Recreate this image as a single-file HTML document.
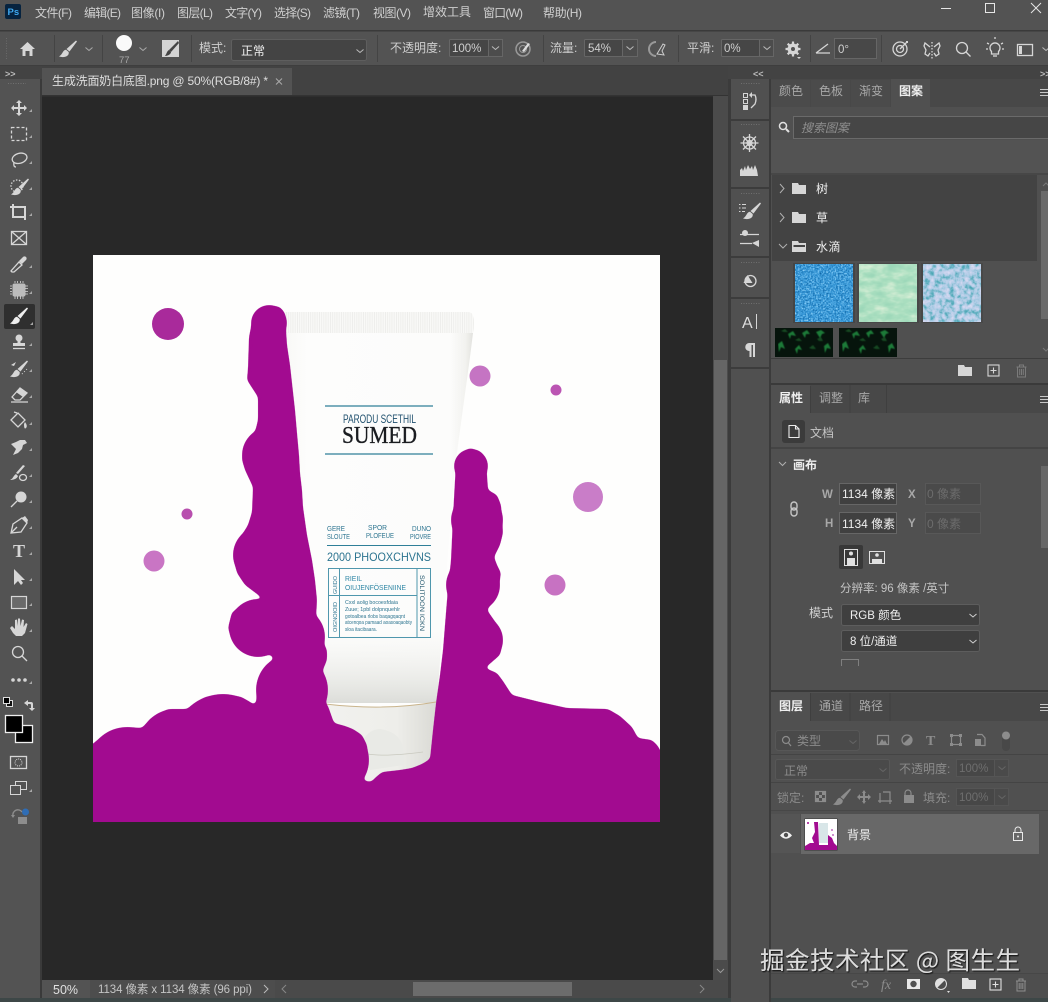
<!DOCTYPE html>
<html><head><meta charset="utf-8"><title>PS</title>
<style>
html,body{margin:0;padding:0;background:#535353;width:1048px;height:1002px;overflow:hidden}
svg{display:block;position:absolute;left:0;top:0}
text{font-family:"Liberation Sans","Noto Sans CJK SC",sans-serif;font-size:12px;fill:#cfcfcf}
.d{fill:#8b8b8b}.t{fill:#a8a8a8}.w{fill:#efefef}
.s{fill:none;stroke:#d6d6d6;stroke-width:1.3}
.f{fill:#d6d6d6}
.g{fill:none;stroke:#8c8c8c;stroke-width:1.2}
.gf{fill:#8c8c8c}
.l{fill:#2c7490;font-family:"Liberation Sans",sans-serif}
</style></head><body>
<svg width="1048" height="1002" viewBox="0 0 1048 1002" xmlns="http://www.w3.org/2000/svg">
<defs>
<filter id="round" x="80" y="295" width="600" height="550" filterUnits="userSpaceOnUse" color-interpolation-filters="sRGB">
<feGaussianBlur stdDeviation="2"/><feComponentTransfer><feFuncA type="linear" slope="9" intercept="-4"/></feComponentTransfer>
</filter>
<filter id="wm" x="-5%" y="-20%" width="110%" height="140%"><feDropShadow dx="1" dy="1" stdDeviation="0.6" flood-color="#111" flood-opacity="1"/></filter>
<filter id="lf" x="0" y="0" width="100%" height="100%"><feGaussianBlur stdDeviation=".5"/></filter>
<filter id="sw1" x="0" y="0" width="100%" height="100%" color-interpolation-filters="sRGB"><feTurbulence type="fractalNoise" baseFrequency=".6" numOctaves="2" seed="4"/><feColorMatrix values="1 0 0 0 0 1 0 0 0 0 1 0 0 0 0 0 0 0 0 1"/><feComponentTransfer><feFuncR type="table" tableValues="0 .1 .22 .5 .75"/><feFuncG type="table" tableValues=".3 .45 .6 .78 .9"/><feFuncB type="table" tableValues=".55 .7 .85 .95 1"/></feComponentTransfer></filter>
<filter id="sw2" x="0" y="0" width="100%" height="100%" color-interpolation-filters="sRGB"><feTurbulence type="fractalNoise" baseFrequency=".07 .14" numOctaves="3" seed="8"/><feColorMatrix values="1 0 0 0 0 1 0 0 0 0 1 0 0 0 0 0 0 0 0 1"/><feComponentTransfer><feFuncR type="table" tableValues=".6 .62 .68 .8 .92"/><feFuncG type="table" tableValues=".84 .85 .88 .92 .97"/><feFuncB type="table" tableValues=".72 .73 .76 .82 .88"/></feComponentTransfer></filter>
<filter id="sw3" x="0" y="0" width="100%" height="100%" color-interpolation-filters="sRGB"><feTurbulence type="fractalNoise" baseFrequency=".2" numOctaves="3" seed="3"/><feColorMatrix values="1 0 0 0 0 1 0 0 0 0 1 0 0 0 0 0 0 0 0 1"/><feComponentTransfer><feFuncR type="table" tableValues=".25 .35 .68 .82 .9"/><feFuncG type="table" tableValues=".62 .68 .8 .84 .92"/><feFuncB type="table" tableValues=".68 .74 .9 .94 .98"/></feComponentTransfer></filter>
<linearGradient id="tubeH" x1="0" x2="1" y1="0" y2="0"><stop offset="0" stop-color="#f8f8f6"/><stop offset=".12" stop-color="#fdfdfc"/><stop offset=".88" stop-color="#fcfcfb"/><stop offset=".96" stop-color="#f2f2ef"/><stop offset="1" stop-color="#e2e2de"/></linearGradient>
<linearGradient id="tubeV" x1="0" x2="0" y1="0" y2="1"><stop offset="0" stop-color="#fff" stop-opacity="0"/><stop offset=".8" stop-color="#f2f2ef" stop-opacity="0"/><stop offset=".95" stop-color="#e6e7e3" stop-opacity=".9"/><stop offset="1" stop-color="#dcddd9"/></linearGradient>
<linearGradient id="cap" x1="0" x2="1" y1="0" y2="0"><stop offset="0" stop-color="#f3f3f0"/><stop offset=".7" stop-color="#eeeeea"/><stop offset="1" stop-color="#dadad5"/></linearGradient>
<pattern id="crimp" width="2.2" height="20" patternUnits="userSpaceOnUse"><rect width="2.2" height="20" fill="#f9f9f7"/><rect width=".7" height="20" fill="#ebebe8"/></pattern>
<clipPath id="cv"><rect x="93" y="255" width="567" height="567"/></clipPath>
<clipPath id="thumb"><rect x="805" y="819" width="32" height="31"/></clipPath>
<g id="brush"><path d="M8-8.500 9-7.500 1.500 2.500-1.500 0Z"/><path d="M-2 .7C-5.500 1-5 5-9 7.500-4 9 1.500 7.500.7 3Z"/></g>
<path id="chev" d="M-3.500-1.500 0 1.500 3.500-1.500" fill="none" stroke-width="1"/>
<g id="folder"><path d="M0 0H6L7 2H14V11H0Z"/></g>
<g id="trash" fill="none" stroke-width="1"><path d="M-5-4H5M-2-4V-6H2V-4M-4-4V6H4V-4M-1.800-2V4M0-2V4M1.800-2V4"/></g>
<g id="plusbox" fill="none" stroke-width="1.100"><rect x="-5.500" y="-5.500" width="11" height="11"/><path d="M-3 0H3M0-3V3"/></g>
<g id="leaves">
<rect width="58" height="29" fill="#06140c"/>
<g filter="url(#lf)">
<path d="M13 6 18 3 21 8 16 7 15 11ZM27 5 32 2 35 6 31 6 30 10ZM41 4 46 2 50 5 47 6 45 10ZM49 18 53 15 56 21 52 20 50 25ZM3 16 7 13 10 21 6 19 4 24ZM20 21 24 17 27 22 23 21 22 26Z" fill="#1f7a38"/>
<path d="M6 3 10 1 13 4 9 4ZM20 12 24 10 27 13 23 13ZM42 11 46 9 48 13 44 13ZM34 20 38 17 41 21 37 21Z" fill="#144a24"/>
</g>
</g>
</defs>

<!-- base -->
<rect width="1048" height="1002" fill="#535353"/>
<rect y="30" width="1048" height="1.500" fill="#3a3a3a"/>
<rect y="65" width="1048" height="1" fill="#3e3e3e"/>
<rect y="66" width="1048" height="13" fill="#434343"/>
<rect y="66" x="42" width="686" height="30" fill="#424242"/>

<!-- title bar -->
<rect x="5" y="4" width="16" height="15" rx="2" fill="#06233f"/>
<text x="7.500" y="15" style="font-size:9.500px;font-weight:bold;fill:#3fa8f0">Ps</text>
<text x="35" y="17" textLength="37">文件(F)</text><text x="84" y="17" textLength="37">编辑(E)</text><text x="131" y="17" textLength="34">图像(I)</text><text x="177" y="17" textLength="36">图层(L)</text><text x="225" y="17" textLength="37">文字(Y)</text><text x="274" y="17" textLength="37">选择(S)</text><text x="323" y="17" textLength="37">滤镜(T)</text><text x="373" y="17" textLength="38">视图(V)</text><text x="423" y="16" textLength="48">增效工具</text><text x="483" y="17" textLength="40">窗口(W)</text><text x="543" y="17" textLength="39">帮助(H)</text>
<path d="M941 8.500H951" stroke="#e6e6e6" stroke-width="1"/>
<rect x="985.500" y="3.500" width="9" height="9" fill="none" stroke="#e6e6e6"/>
<path d="M1031 3 1041 13M1041 3 1031 13" stroke="#e6e6e6" stroke-width="1"/>

<!-- options bar -->
<path d="M6.500 38v22" stroke="#6a6a6a" stroke-width="1" stroke-dasharray="1 1.500"/>
<path d="M20 49 27.500 42 35 49H32.500V56H29.500V51H25.500V56H22.500V49Z" class="f"/>
<g stroke="#444" stroke-width="1"><path d="M54.500 35V62M102.500 35V62M191.500 35V62M377.500 35V62M543.500 35V62M678.500 35V62M810.500 35V62M881.500 35V62"/></g>
<use href="#brush" x="68" y="49" fill="#d6d6d6"/>
<use href="#chev" x="89" y="49" stroke="#aaa"/>
<circle cx="124" cy="43" r="8" fill="#fafafa"/>
<text x="119" y="63" style="font-size:9.500px" class="t">77</text>
<use href="#chev" x="143" y="49" stroke="#aaa"/>
<rect x="162" y="40" width="17" height="17" fill="#d4d4d4"/>
<path d="M178 41 169 50 171 52 179 43Z" fill="#444"/><path d="M165 56C167 53 167 51 169 50L171 52C171 54 168 56 165 56Z" fill="#444"/>
<text x="199" y="52">模式:</text>
<rect x="231.500" y="39.500" width="135" height="21" rx="2" fill="#444" stroke="#5e5e5e"/>
<text x="241" y="55" class="w">正常</text>
<use href="#chev" x="360" y="51" stroke="#bbb"/>
<text x="390" y="52">不透明度:</text>
<rect x="449.500" y="39.500" width="39" height="17" rx="1" fill="#464646" stroke="#666"/>
<rect x="488.500" y="39.500" width="14" height="17" fill="#4c4c4c" stroke="#666"/>
<text x="452" y="52" style="font-size:11.500px">100%</text>
<use href="#chev" x="495.500" y="48" stroke="#bbb"/>
<g transform="translate(523 49)"><circle r="7" fill="none" stroke="#999" stroke-width="1.500"/><circle r="3.500" fill="none" stroke="#999"/><path d="M-1 2 5-6 7-5 1 3Z" fill="#ddd"/></g>
<text x="550" y="52">流量:</text>
<rect x="584.500" y="39.500" width="38" height="17" rx="1" fill="#464646" stroke="#666"/>
<rect x="622.500" y="39.500" width="15" height="17" fill="#4c4c4c" stroke="#666"/>
<text x="588" y="52" style="font-size:11.500px">54%</text>
<use href="#chev" x="630" y="48" stroke="#bbb"/>
<g transform="translate(659 49)"><path d="M-3-7A7 7 0 0 0-3 7" fill="none" stroke="#999" stroke-width="2"/><path d="M-2 5 4-5 6-4 3 2 5 6Z" fill="none" stroke="#ccc"/></g>
<text x="687" y="52">平滑:</text>
<rect x="721.500" y="39.500" width="38" height="17" rx="1" fill="#464646" stroke="#666"/>
<rect x="759.500" y="39.500" width="14" height="17" fill="#4c4c4c" stroke="#666"/>
<text x="724" y="52" style="font-size:11.500px">0%</text>
<use href="#chev" x="767" y="48" stroke="#bbb"/>
<g transform="translate(793 49)"><circle r="5.500" fill="#d6d6d6"/><path d="M0-7.500V7.500M-7.500 0H7.500M-5.300-5.300 5.300 5.300M-5.300 5.300 5.300-5.300" stroke="#d6d6d6" stroke-width="2.200"/><circle r="2" fill="#535353"/></g>
<path d="M797 57H801L799 59Z" class="f"/>
<path d="M816 53H830M816 53 828 44" class="s" stroke-width="1"/>
<rect x="834.500" y="38.500" width="42" height="20" fill="#484848" stroke="#666" stroke-width="1"/>
<text x="838" y="53" style="font-size:11.500px">0°</text>
<g transform="translate(900 49)"><circle r="7" class="s"/><circle r="3.500" class="s" stroke-width="1"/><path d="M0 0 7-7" class="s"/><path d="M6-8 8-8 8-6 6-6Z" class="f"/></g>
<g transform="translate(932 49)" class="s" stroke-width="1"><path d="M0-7V10" stroke-dasharray="1.500 1.500"/><path d="M-2-2-7-6-8-3-6 1-7 5-4 7-2 4M2-2 7-6 8-3 6 1 7 5 4 7 2 4" fill="none"/></g>
<g transform="translate(962 48)"><circle cx="0" cy="0" r="5.500" class="s"/><path d="M4 4 8.500 8.500" class="s" stroke-width="2"/></g>
<g transform="translate(995 48)"><path d="M-3.500 3.500A5 5 0 1 1 3.500 3.500V6H-3.500Z" class="s"/><path d="M-2 8H2" class="s"/><path d="M-8-5-6-4M8-5 6-4M0-11V-9M-9 1H-7M9 1H7" class="s" stroke-width="1"/></g>
<rect x="1017.500" y="44.500" width="15" height="11" class="s"/><rect x="1019" y="46" width="3" height="8" fill="#d6d6d6"/>
<use href="#chev" x="1046" y="49" stroke="#bbb"/>

<!-- left strip header -->
<text x="5" y="77" style="font-size:9px;font-weight:bold;fill:#bbb">&gt;&gt;</text>
<path d="M8 83.500H26" stroke="#707070" stroke-dasharray="1 1.500" stroke-width="1"/>
<rect x="40" y="79" width="2" height="923" fill="#3a3a3a"/>

<!-- doc tab -->
<rect x="42" y="68" width="250" height="28" fill="#535353"/>
<text x="52" y="85" class="w" style="fill:#dedede" textLength="216">生成洗面奶白底图.png @ 50%(RGB/8#) *</text>
<path d="M276 78.500 282 84.500M282 78.500 276 84.500" stroke="#aaa" stroke-width="1"/>

<!-- doc area -->
<rect x="42" y="96" width="671" height="884" fill="#282828"/>
<rect x="42" y="95" width="686" height="1.500" fill="#333"/>
<rect x="713" y="96" width="15" height="884" fill="#4b4b4b"/>
<rect x="714" y="360" width="13" height="600" fill="#656565"/>
<path d="M717 969 720.500 972.500 724 969" fill="none" stroke="#999"/>
<rect x="728" y="79" width="3" height="923" fill="#3b3b3b"/>

<!-- canvas -->
<rect x="93" y="255" width="567" height="567" fill="#fefefd"/>
<g clip-path="url(#cv)">
<path d="M285 333H473L470 357 455 467 445 590 437 703H305L299 640 292 470Z" fill="url(#tubeH)"/>
<path d="M285 333H473L470 357 455 467 445 590 437 703H305L299 640 292 470Z" fill="url(#tubeV)"/>
<path d="M285 312Q284 328 285 333H473Q475 322 473 316Q472 312 468 312Z" fill="url(#crimp)"/>
<path d="M305 703Q385 711 436 702L430 765 400 780 356 785 345 730Z" fill="url(#cap)"/>
<path d="M325 704Q385 711 436 702" fill="none" stroke="#c9b48c" stroke-width="1"/>
<path d="M363 755V740Q370 729 380 729Q403 732 404 754V765L370 770Z" fill="#e9eae6"/>
<path d="M368 754Q385 757 423 752" fill="none" stroke="#c9c9bf" stroke-width=".7"/>
<g stroke="#2f7f98" stroke-width="1.200" fill="none"><path d="M325 406H433M325 454H433"/></g>
<text x="343" y="423" class="l" style="font-size:12px;fill:#20506e" textLength="73" lengthAdjust="spacingAndGlyphs">PARODU SCETHIL</text>
<text x="342" y="443" style="font-family:'Liberation Serif',serif;font-size:24px;fill:#1a1c20;stroke:#1a1c20;stroke-width:.35" textLength="75" lengthAdjust="spacingAndGlyphs">SUMED</text>
<text x="327" y="531" class="l" style="font-size:7.500px" textLength="18" lengthAdjust="spacingAndGlyphs">GERE</text>
<text x="327" y="539" class="l" style="font-size:7.500px" textLength="23" lengthAdjust="spacingAndGlyphs">SLOUTE</text>
<text x="368" y="530" class="l" style="font-size:7.500px" textLength="19" lengthAdjust="spacingAndGlyphs">SPOR</text>
<text x="366" y="538" class="l" style="font-size:7.500px" textLength="28" lengthAdjust="spacingAndGlyphs">PLOFEUE</text>
<text x="412" y="531" class="l" style="font-size:7.500px" textLength="19" lengthAdjust="spacingAndGlyphs">DUNO</text>
<text x="410" y="539" class="l" style="font-size:7.500px" textLength="21" lengthAdjust="spacingAndGlyphs">PIOVRE</text>
<path d="M327 545.500H431" stroke="#2f7f98" stroke-width=".9"/>
<text x="327" y="561" class="l" style="font-size:12px" textLength="104" lengthAdjust="spacingAndGlyphs">2000 PHOOXCHVNS</text>
<g fill="none" stroke="#4f97ad" stroke-width="1"><rect x="328.500" y="568.500" width="102" height="69"/><path d="M339.500 568.500V637.500M417 568.500V637.500M328.500 595.500H417"/></g>
<text x="345" y="581" class="l" style="font-size:7.500px;fill:#2e86a5" textLength="17" lengthAdjust="spacingAndGlyphs">RIEIL</text>
<text x="345" y="590" class="l" style="font-size:7.500px;fill:#2e86a5" textLength="61" lengthAdjust="spacingAndGlyphs">OIUJENFÖSENIINE</text>
<text x="345" y="604" class="l" style="font-size:5px" textLength="53" lengthAdjust="spacingAndGlyphs">Cxxl aolig bocoesfdaia</text>
<text x="345" y="611" class="l" style="font-size:5px" textLength="55" lengthAdjust="spacingAndGlyphs">Zuue; 1pbl dolpnquehlr</text>
<text x="345" y="618" class="l" style="font-size:5px" textLength="60" lengthAdjust="spacingAndGlyphs">gotoalbea rlobs baqagqaqnt</text>
<text x="345" y="624" class="l" style="font-size:5px" textLength="67" lengthAdjust="spacingAndGlyphs">atcenqoa pamaad aoasoaqaobty</text>
<text x="345" y="631" class="l" style="font-size:5px" textLength="32" lengthAdjust="spacingAndGlyphs">sloa itacibaara.</text>
<text transform="translate(337 594) rotate(-90)" class="l" style="font-size:5.500px" textLength="18" lengthAdjust="spacingAndGlyphs">GUIDO</text>
<text transform="translate(337 632) rotate(-90)" class="l" style="font-size:5.500px" textLength="30" lengthAdjust="spacingAndGlyphs">OIGNOIOID</text>
<text transform="translate(420 575) rotate(90)" class="l" style="font-size:6.500px;fill:#24586e" textLength="56" lengthAdjust="spacingAndGlyphs">SOLITOON ICKN</text>

<circle cx="168" cy="324" r="16" fill="#a92a9b"/>
<circle cx="480" cy="376" r="10.500" fill="#c574c3"/>
<circle cx="556" cy="390" r="5.500" fill="#bb55b3"/>
<circle cx="588" cy="497" r="15" fill="#c97dc8"/>
<circle cx="187" cy="514" r="5.500" fill="#b84fae"/>
<circle cx="154" cy="561" r="10.500" fill="#c975c4"/>
<circle cx="555" cy="585" r="10.500" fill="#c772c2"/>

<g filter="url(#round)" fill="#a20b90">
<path d="M270 305 280 307 285 313 286 330 287 345 290 365 292 383 295 410 297 433 299 455 300 473 302 490 303 507 307 535 312 560 315 580 317 600 316 618 314 630 322 640 327 650 327 660 322 672 312 690 322 698 328 706 334 723 345 726 353 729 362 735 367 745 368 755 363 765 356 772 356 779 371 782 376 777 382 772 400 770 412 768 422 764 430 759 433 730 436 703 440 675 443 650 447 600 451 560 453 517 455 480 456 465 460 453 470 448 480 451 485 460 487 475 488 490 497 495 501 505 503 533 500 545 494 557 497 565 501 573 499 585 494 598 487 610 494 620 500 630 503 642 500 655 485 668 497 673 503 681 512 695 540 702 567 708 608 709 620 716 632 727 638 738 652 740 658 746 665 760 665 835 85 835 85 750 100 738 112 731 127 727 142 728 151 718 168 709 188 709 205 697 223 694 242 697 253 706 256 703 258 684 268 666 282 655 279 653 255 651 238 647 232 640 228 628 232 612 250 603 265 600 245 585 237 573 233 557 237 543 248 525 252 512 253 487 245 470 242 460 243 450 255 432 258 420 258 397 247 380 248 368 249 337 253 317 262 307Z"/>
<circle cx="269" cy="323" r="18"/><circle cx="270" cy="455" r="28"/><circle cx="262" cy="555" r="29"/><circle cx="258" cy="628" r="29"/><circle cx="295" cy="637" r="30"/>
<circle cx="471" cy="466" r="17"/><circle cx="477" cy="520" r="26"/><circle cx="473" cy="585" r="27"/><circle cx="478" cy="640" r="25"/>
<circle cx="127" cy="767" r="40"/><circle cx="175" cy="745" r="36"/><circle cx="223" cy="744" r="50"/><circle cx="590" cy="759" r="50"/><circle cx="292" cy="690" r="36"/><circle cx="333" cy="760" r="36"/>
</g>
</g>

<!-- left toolbar -->
<rect x="4" y="304" width="31" height="25" rx="2" fill="#2f2f2f"/>
<g>
<g transform="translate(19 108)"><path d="M0-8 3-5H1V-1H5V-3L8 0 5 3V1H1V5H3L0 8-3 5H-1V1H-5V3L-8 0-5-3V-1H-1V-5H-3Z" class="f"/></g>
<rect x="11.500" y="127.500" width="15" height="13" fill="none" stroke="#d6d6d6" stroke-dasharray="3 2" stroke-width="1.300"/>
<g transform="translate(19 160)"><ellipse cx="1" cy="-1.500" rx="7.500" ry="5" class="s" transform="rotate(-15)"/><path d="M-5 2Q-6 7-3 7" class="s"/></g>
<g transform="translate(19 186)"><circle cx="-2" cy="0" r="6" fill="none" stroke="#d6d6d6" stroke-dasharray="1.500 1.500" stroke-width="1.300"/><use href="#brush" x="1" y="1" class="f"/></g>
<g transform="translate(19 212)"><path d="M-6-8V5H7M-9-5H6V8" fill="none" stroke="#d6d6d6" stroke-width="2"/></g>
<g transform="translate(19 238)"><rect x="-7.500" y="-6.500" width="15" height="13" class="s"/><path d="M-7.500-6.500 7.500 6.500M7.500-6.500-7.500 6.500" class="s" stroke-width="1"/></g>
<g transform="translate(19 264)"><path d="M-7 8-8 7 0-2 3 1-5 8Z" class="s" stroke-width="1"/><path d="M0-3 4-7A2 2 0 0 1 7-4L3 0Z" class="f"/></g>
<g transform="translate(19 290)"><rect x="-6.500" y="-6.500" width="13" height="13" rx="2" fill="#bcbcbc"/><path d="M-4-9V9M-1.500-9V9M1.500-9V9M4-9V9M-9-4H9M-9-1.500H9M-9 1.500H9M-9 4H9" stroke="#d6d6d6" stroke-width=".8" stroke-dasharray="2 13 3"/></g>
<use href="#brush" x="19" y="316" fill="#eee"/>
<g transform="translate(19 342)"><circle cy="-4" r="3.500" class="f"/><path d="M-1.500-2H1.500V1H6V4H-6V1H-1.500Z" class="f"/><path d="M-6 6.500H6" class="s"/></g>
<g transform="translate(19 368)"><use href="#brush" x="0" y="1" class="f"/><path d="M-8-3-3-6-5-2Z" class="f"/><path d="M3 6 8 1" stroke="#d6d6d6" stroke-dasharray="1 2"/></g>
<g transform="translate(19 394)"><path d="M-7 3 1-6 8-1 1 6H-4Z" class="s"/><path d="M-3-2 1-6 8-1 4 3Z" class="f"/><path d="M-8 8H9" class="s" stroke-width="1"/></g>
<g transform="translate(19 421)"><path d="M-8-1-1-8 6-1-1 6Z" class="s"/><path d="M-5-9-2-8" class="s"/><path d="M6 1Q9 5 7 7T5 3Z" class="f"/></g>
<g transform="translate(19 447)"><path d="M-6 8-3 2-8-3-3-5 1-7 6-7 8-4 4-2 3 2-1 6Z" class="f"/></g>
<g transform="translate(19 473)"><path d="M4-8 6-7-1 1-3 0Z" class="f"/><path d="M-3 1-1 3C-2 6-6 7-9 7-6 6-6 3-3 1Z" class="f"/><ellipse cx="4" cy="4.500" rx="3.500" ry="3" class="s" stroke-width="1.200"/></g>
<g transform="translate(19 499)"><circle cx="2" cy="-2" r="5.500" class="f"/><path d="M-2 2-8 8" class="s" stroke-width="2.200"/></g>
<g transform="translate(19 525)"><path d="M-8 8-6-1 3-7 8-2 2 7Z" class="s"/><path d="M-8 8-2 2" class="s" stroke-width="1"/><path d="M3-7 6-9 9-5 8-2" class="f"/></g>
<text x="13" y="557" style="font-family:'Liberation Serif',serif;font-size:18px;font-weight:bold;fill:#d6d6d6">T</text>
<path d="M14 569V585L18 581 21 585 23 583 21 580H25Z" class="f"/>
<rect x="11.500" y="596.500" width="15" height="12" fill="#6a6a6a" stroke="#d6d6d6" stroke-width="1.200"/>
<path d="M13 633 10 628 12 626 15 629V620L17 619.500 18 626V618.500L20 618.500 20.500 626 22 619.500 24 620 23.500 627 26 623 27.500 624 25 633 22 636H16Z" class="f"/>
<g transform="translate(18 653)"><circle cx="0" cy="-1" r="5.500" class="s"/><path d="M4 3 9 8" class="s" stroke-width="2"/></g>
<circle cx="13" cy="680" r="1.800" class="f"/><circle cx="19" cy="680" r="1.800" class="f"/><circle cx="25" cy="680" r="1.800" class="f"/>
<g fill="#a8a8a8"><path d="M32 112V109L29 112ZM32 138V135L29 138ZM32 164V161L29 164ZM32 190V187L29 190ZM32 216V213L29 216ZM32 268V265L29 268ZM32 294V291L29 294ZM33 325V322L30 325ZM32 346V343L29 346ZM32 372V369L29 372ZM32 398V395L29 398ZM32 425V422L29 425ZM32 451V448L29 451ZM32 477V474L29 477ZM32 503V500L29 503ZM32 529V526L29 529ZM32 555V552L29 555ZM32 581V578L29 581ZM32 606V603L29 606ZM32 632V629L29 632ZM32 684V681L29 684ZM32 792V789L29 792Z"/></g>
<rect x="6.500" y="700.500" width="6" height="6" fill="#111" stroke="#ddd"/><rect x="3.500" y="697.500" width="6" height="6" fill="#000" stroke="#ddd"/>
<path d="M24 703 28 700V702H31Q33 702 33 704V708H35L32 711 29 708H31V705Q31 704 30 704H28V706Z" class="f"/>
<rect x="15.500" y="725.500" width="17" height="17" fill="#000" stroke="#eee" stroke-width="1.300"/>
<rect x="5.500" y="715.500" width="17" height="17" fill="#000" stroke="#eee" stroke-width="1.300"/>
<rect x="10.500" y="756.500" width="16" height="12" class="s" stroke-width="1"/><circle cx="18.500" cy="762.500" r="3.500" fill="none" stroke="#d6d6d6" stroke-width="1" stroke-dasharray="1 1"/>
<rect x="15.500" y="781.500" width="11" height="8" fill="#535353" stroke="#d6d6d6"/><rect x="10.500" y="785.500" width="10" height="9" fill="#535353" stroke="#d6d6d6"/>
<g transform="translate(19 816)"><path d="M-6 0A5 5 0 0 1 3-4" fill="none" stroke="#8d8d8d" stroke-width="1.400"/><path d="M-8-1H-4L-6 2Z" fill="#8d8d8d"/><rect x="-1" y="1" width="9" height="7" fill="#8d8d8d"/><circle cx="6.500" cy="-4" r="3.500" fill="#2f6db5"/></g>
</g>

<!-- status bar -->
<rect x="42" y="980" width="686" height="18" fill="#4a4a4a"/>
<rect x="42" y="980" width="48" height="18" fill="#535353"/>
<text x="53" y="994" style="fill:#e0e0e0;font-size:12.500px">50%</text>
<rect x="90" y="980" width="185" height="18" fill="#4d4d4d"/>
<text x="98" y="993" style="font-size:11.500px;fill:#c4c4c4" textLength="154">1134 像素 x 1134 像素 (96 ppi)</text>
<path d="M264 985 268 989 264 993" fill="none" stroke="#bbb"/>
<path d="M286 985 282 989 286 993" fill="none" stroke="#888"/>
<rect x="413" y="982" width="159" height="14" fill="#6c6c6c"/>
<path d="M700 985 704 989 700 993" fill="none" stroke="#888"/>
<rect y="998" width="1048" height="4" fill="#3d4747"/>

<!-- top bar right -->
<text x="753" y="77" style="font-size:9px;font-weight:bold;fill:#bbb">&lt;&lt;</text>
<text x="1040" y="77" style="font-size:9px;font-weight:bold;fill:#bbb">&gt;&gt;</text>

<!-- dock column -->
<rect x="731" y="79" width="38" height="923" fill="#505050"/>
<rect x="769" y="79" width="2" height="923" fill="#3b3b3b"/>
<g fill="#3c3c3c"><rect x="731" y="119" width="38" height="2"/><rect x="731" y="187" width="38" height="2"/><rect x="731" y="256" width="38" height="2"/><rect x="731" y="297" width="38" height="2"/><rect x="731" y="367" width="38" height="2"/></g>
<path d="M741 83.500H760M741 124.500H760M741 193.500H760M741 262.500H760M741 303.500H760" stroke="#6f6f6f" stroke-dasharray="1 1.500"/>
<rect x="743.500" y="93.500" width="4" height="4" fill="none" stroke="#d6d6d6"/><rect x="743.500" y="99.500" width="4" height="4" fill="none" stroke="#d6d6d6"/><rect x="743" y="105" width="5" height="5" class="f"/>
<path d="M751 95H755Q757 99 755 104L751 108" class="s"/><path d="M752 92V98L749 95Z" class="f"/>
<g transform="translate(749.500 143)" class="s" stroke-width="1"><circle r="6"/><circle r="2.500"/><path d="M0-9V9M-9 0H9M-6.500-6.500 6.500 6.500M-6.500 6.500 6.500-6.500"/></g>
<path d="M740 176V170L742 168 743 171 745 166 746 170 748 165 750 169 752 166 753 170 755 165 757 170 758 176Z" class="f"/>
<g transform="translate(752 211)"><use href="#brush" fill="#d6d6d6"/></g>
<path d="M739 204.500H740.500M739 208H740.500M739 211.500H740.500M742 204.500H746M742 208H746M742 211.500H745" stroke="#d6d6d6"/>
<path d="M740 234.500H759M740 243.500H752" class="s"/><circle cx="745" cy="233" r="3" class="f"/><path d="M752 243 759 240V247Z" class="f"/>
<g transform="translate(749.500 281)"><circle cx="1" r="5.500" class="s"/><path d="M-6 2-2-6 3 2Z" class="f"/></g>
<text x="742" y="328" style="font-size:16px;fill:#dedede">A</text><path d="M756.500 314V329" stroke="#d6d6d6"/>
<path d="M749 343H755V357H753V345H751.500V357H749.500V351A4 4 0 0 1 749 343Z" class="f"/>

<!-- PATTERN PANEL -->
<rect x="771" y="79" width="277" height="304" fill="#505050"/>
<rect x="771" y="79" width="277" height="28" fill="#484848"/>
<g><rect x="771" y="80" width="39" height="27" fill="#4b4b4b"/><rect x="811" y="80" width="39" height="27" fill="#4b4b4b"/><rect x="851" y="80" width="39" height="27" fill="#4b4b4b"/><rect x="891" y="79" width="39" height="28" fill="#505050"/></g>
<text x="779" y="95" class="t">颜色</text><text x="819" y="95" class="t">色板</text><text x="859" y="95" class="t">渐变</text><text x="899" y="95" class="w" style="font-weight:bold">图案</text>
<path d="M1040 89.500H1048M1040 92.500H1048M1040 95.500H1048" stroke="#c8c8c8"/>
<circle cx="783" cy="126" r="3.500" fill="none" stroke="#e0e0e0" stroke-width="1.500"/><path d="M786 129 789 132" stroke="#e0e0e0" stroke-width="2"/>
<rect x="793.500" y="116.500" width="260" height="22" fill="#464646" stroke="#6a6a6a"/>
<text x="801" y="132" style="font-style:italic;fill:#8f8f8f">搜索图案</text>
<rect x="771" y="140" width="277" height="33" fill="#535353"/>
<rect x="771" y="173" width="277" height="2" fill="#474747"/>
<rect x="772" y="175" width="265" height="86" fill="#434343"/>
<path d="M780 184 784 188.500 780 193" fill="none" stroke="#b0b0b0"/>
<path d="M780 213 784 217.500 780 222" fill="none" stroke="#b0b0b0"/>
<path d="M779 244 783 248 787 244" fill="none" stroke="#b0b0b0"/>
<use href="#folder" x="792" y="183" class="f"/><use href="#folder" x="792" y="212" class="f"/>
<path d="M792 241H798L799 243H806V252H792ZM793.500 245V247H805V245Z" class="f"/>
<text x="816" y="193" class="w">树</text><text x="816" y="222" class="w">草</text><text x="816" y="251" class="w" letter-spacing=".5">水滴</text>
<rect x="1041" y="191" width="7" height="128" fill="#6a6a6a"/>
<path d="M1043 348 1046 351 1049 348M1043 186 1046 183 1049 186" fill="none" stroke="#777"/>
<rect x="793" y="263" width="62" height="60" fill="#454545"/><rect x="857" y="263" width="62" height="60" fill="#484848"/><rect x="921" y="263" width="62" height="60" fill="#484848"/>
<rect x="795" y="264" width="58" height="58" fill="#3f93d3" filter="url(#sw1)"/>
<rect x="859" y="264" width="58" height="58" fill="#a5dfc0" filter="url(#sw2)"/>
<rect x="923" y="264" width="58" height="58" fill="#a8d4e4" filter="url(#sw3)"/>
<use href="#leaves" x="775" y="328"/>
<use href="#leaves" x="839" y="328"/>
<rect x="771" y="358" width="277" height="1" fill="#3d3d3d"/>
<rect x="771" y="359" width="277" height="24" fill="#505050"/>
<use href="#folder" x="958" y="365" class="f"/>
<use href="#plusbox" x="993.500" y="370.500" stroke="#d6d6d6"/>
<use href="#trash" x="1021.500" y="371" stroke="#7b7b7b"/>
<rect x="771" y="383" width="277" height="2" fill="#3a3a3a"/>

<!-- PROPERTIES PANEL -->
<rect x="771" y="385" width="277" height="305" fill="#505050"/>
<rect x="771" y="385" width="277" height="28" fill="#484848"/>
<rect x="771" y="385" width="39" height="28" fill="#505050"/>
<path d="M850 385V413M810.500 386V413M886.500 385V413" stroke="#3f3f3f"/>
<text x="779" y="402" class="w" style="font-weight:bold">属性</text><text x="819" y="402" class="t">调整</text><text x="858" y="402" class="t">库</text>
<path d="M1040 396.500H1048M1040 399.500H1048M1040 402.500H1048" stroke="#c8c8c8"/>
<rect x="782" y="420" width="23" height="23" rx="3" fill="#3b3b3b"/>
<path d="M789 425.500H795.500L799 429V437.500H789ZM795.500 425.500V429H799" fill="none" stroke="#eaeaea" stroke-width="1.100"/>
<text x="810" y="437" class="t" style="fill:#c4c4c4">文档</text>
<rect x="771" y="447" width="277" height="2" fill="#444"/>
<path d="M779 462 782.500 465.500 786 462" fill="none" stroke="#b0b0b0"/>
<text x="793" y="469" class="w" style="font-weight:bold">画布</text>
<rect x="1041" y="466" width="7" height="82" fill="#676767"/>
<text x="822" y="498" class="t" style="font-weight:bold;font-size:11.500px">W</text>
<text x="825" y="527" class="t" style="font-weight:bold;font-size:11.500px">H</text>
<text x="908" y="498" class="t" style="font-weight:bold;font-size:11.500px">X</text>
<text x="908" y="527" class="t" style="font-weight:bold;font-size:11.500px">Y</text>
<rect x="839.500" y="483.500" width="57" height="21" fill="#404040" stroke="#666"/>
<rect x="839.500" y="512.500" width="57" height="21" fill="#404040" stroke="#666"/>
<rect x="925.500" y="483.500" width="55" height="21" fill="#4a4a4a" stroke="#585858"/>
<rect x="925.500" y="512.500" width="55" height="21" fill="#4a4a4a" stroke="#585858"/>
<text x="842" y="498" class="w">1134 像素</text><text x="842" y="528" class="w">1134 像素</text>
<text x="927" y="498" style="fill:#6c6c6c">0 像素</text><text x="927" y="528" style="fill:#6c6c6c">0 像素</text>
<g fill="none" stroke="#c6c6c6" stroke-width="1.400"><rect x="791" y="502" width="6" height="8" rx="3"/><rect x="791" y="508" width="6" height="8" rx="3"/></g>
<rect x="839" y="545" width="24" height="24" rx="2" fill="#383838"/>
<rect x="844.500" y="549.500" width="13" height="16" fill="none" stroke="#e0e0e0"/>
<circle cx="851" cy="553.500" r="2" fill="#e0e0e0"/><path d="M847 565V558H855V565Z" fill="#e0e0e0"/>
<rect x="869.500" y="551.500" width="15" height="12" fill="none" stroke="#e0e0e0"/>
<circle cx="877" cy="555" r="1.800" fill="#e0e0e0"/><path d="M872 563.500V559H882V563.500Z" fill="#e0e0e0"/>
<text x="840" y="592" style="fill:#c4c4c4;font-size:11.500px">分辨率: 96 像素 /英寸</text>
<text x="809" y="617" style="fill:#d0d0d0">模式</text>
<rect x="841.500" y="604.500" width="138" height="21" rx="2" fill="#3f3f3f" stroke="#5d5d5d"/>
<rect x="841.500" y="630.500" width="138" height="21" rx="2" fill="#3f3f3f" stroke="#5d5d5d"/>
<text x="850" y="619" class="w" style="font-size:11.500px">RGB  颜色</text>
<text x="850" y="645" class="w" style="font-size:11.500px">8  位/通道</text>
<use href="#chev" x="973" y="615.500" stroke="#cfcfcf"/><use href="#chev" x="973" y="641.500" stroke="#cfcfcf"/>
<path d="M841.500 666V659.500H858.500V666" fill="none" stroke="#808080"/>
<rect x="771" y="690" width="277" height="2" fill="#3a3a3a"/>

<!-- LAYERS PANEL -->
<rect x="771" y="692" width="277" height="306" fill="#505050"/>
<rect x="771" y="693" width="277" height="28" fill="#484848"/>
<rect x="771" y="693" width="39" height="28" fill="#505050"/>
<path d="M810.500 693V721M850 693V721M890 693V721" stroke="#3f3f3f"/>
<text x="779" y="710" class="w" style="font-weight:bold">图层</text><text x="819" y="710" class="t">通道</text><text x="859" y="710" class="t">路径</text>
<path d="M1040 704.500H1048M1040 707.500H1048M1040 710.500H1048" stroke="#c8c8c8"/>
<rect x="775.500" y="730.500" width="84" height="20" rx="3" fill="#4a4a4a" stroke="#575757"/>
<circle cx="786" cy="740" r="3.500" class="g"/><path d="M788.500 743 791 746" class="g" stroke-width="1.500"/>
<text x="797" y="745" class="d">类型</text>
<use href="#chev" x="853" y="742" stroke="#666"/>
<rect x="877.500" y="735.500" width="11" height="9" class="g"/><path d="M879 744 882 739 884 742 885 740 887 744Z" class="gf"/>
<circle cx="907" cy="740" r="5" class="g"/><path d="M907 735A5 5 0 0 1 907 745Z" class="gf" transform="rotate(45 907 740)"/>
<text x="926" y="745" style="font-family:'Liberation Serif',serif;font-size:14px;font-weight:bold;fill:#8c8c8c">T</text>
<rect x="951.500" y="735.500" width="9" height="9" class="g"/><g class="gf"><rect x="950" y="734" width="3" height="3"/><rect x="959" y="734" width="3" height="3"/><rect x="950" y="743" width="3" height="3"/><rect x="959" y="743" width="3" height="3"/></g>
<path d="M977 734.500H982L985 738V745.500H981" class="g"/><rect x="975" y="739" width="6" height="7" class="gf"/>
<rect x="1002" y="736" width="8" height="15" rx="4" fill="#484848"/><circle cx="1006" cy="735.500" r="4" fill="#8c8c8c"/>
<rect x="771" y="754" width="277" height="1" fill="#444"/>
<rect x="775.500" y="759.500" width="114" height="20" rx="2" fill="#4a4a4a" stroke="#575757"/>
<text x="784" y="775" class="d">正常</text><use href="#chev" x="883" y="770" stroke="#666"/>
<text x="899" y="773" class="d">不透明度:</text>
<rect x="956.500" y="759.500" width="38" height="17" fill="#474747" stroke="#555"/><rect x="994.500" y="759.500" width="14" height="17" fill="#4a4a4a" stroke="#555"/>
<text x="959" y="772" style="fill:#6e6e6e;font-size:11.500px">100%</text><use href="#chev" x="1002" y="768" stroke="#666"/>
<rect x="771" y="782" width="277" height="1" fill="#444"/>
<text x="777" y="802" class="d">锁定:</text>
<rect x="815.500" y="791.500" width="10" height="10" class="g"/><path d="M816 792H819V795H816ZM822 792H825V795H822ZM819 795H822V798H819ZM816 798H819V801H816ZM822 798H825V801H822Z" class="gf"/>
<use href="#brush" x="842" y="797" class="gf"/>
<path d="M864 790 866 793H865V796H868V794L871 797 868 800V798H865V801H866L864 804 862 801H863V798H860V800L857 797 860 794V796H863V793H862Z" class="gf"/>
<path d="M880 793V803M878 801H892M883 792H890V804" class="g"/>
<path d="M905 795V793A3 3 0 0 1 911 793V795" class="g"/><rect x="904" y="795" width="10" height="8" class="gf"/>
<text x="923" y="802" class="d">填充:</text>
<rect x="956.500" y="788.500" width="38" height="17" fill="#474747" stroke="#555"/><rect x="994.500" y="788.500" width="14" height="17" fill="#4a4a4a" stroke="#555"/>
<text x="959" y="801" style="fill:#6e6e6e;font-size:11.500px">100%</text><use href="#chev" x="1002" y="797" stroke="#666"/>
<rect x="771" y="810" width="277" height="1" fill="#474747"/>
<rect x="771" y="814" width="29" height="39" fill="#555"/>
<rect x="801" y="814" width="238" height="40" fill="#686868"/>
<path d="M780 835.500Q786 828 792 835.500 786 842 780 835.500Z" fill="#f0f0f0"/><circle cx="786" cy="835" r="2.200" fill="#505050"/>
<rect x="804.500" y="818.500" width="33" height="32" fill="#333"/>
<g clip-path="url(#thumb)"><rect x="805" y="819" width="32" height="31" fill="#fff"/>
<rect x="819" y="823" width="9" height="20" fill="#d8e6e8"/>
<path d="M814 822H818L819 845H828V835L832 838 834 843 837 846V850H805V846L810 843H814L812 838 815 832Z" fill="#a20b90"/>
<circle cx="808" cy="823" r="1" fill="#a20b90"/><circle cx="832" cy="830" r="1" fill="#c070c0"/><circle cx="833" cy="835" r="1" fill="#c070c0"/></g>
<text x="847" y="839" class="w">背景</text>
<path d="M1015 832V830A3 3 0 0 1 1021 830V832" fill="none" stroke="#eaeaea"/>
<rect x="1013.500" y="832.500" width="9" height="8" fill="none" stroke="#eaeaea"/><circle cx="1018" cy="836.500" r="1" fill="#eaeaea"/>
<rect x="771" y="973" width="277" height="25" fill="#4e4e4e"/>
<rect x="771" y="973" width="277" height="1" fill="#474747"/>
<path d="M857 981H855A3 3 0 0 0 855 987H857M863 981H865A3 3 0 0 1 865 987H863M857 984H863" class="g"/>
<text x="881" y="989" style="font-family:'Liberation Serif',serif;font-style:italic;font-size:14px;fill:#8c8c8c">fx</text>
<rect x="907" y="979" width="13" height="10" fill="#e8e8e8"/><circle cx="913.500" cy="984" r="3.200" fill="#505050"/>
<circle cx="941" cy="984" r="5.500" fill="none" stroke="#e0e0e0"/><path d="M945 980A5.500 5.500 0 0 0 937 988Z" fill="#e0e0e0"/><path d="M947 991H950L948.500 993Z" fill="#e0e0e0"/>
<use href="#folder" x="962" y="978" fill="#e0e0e0"/>
<use href="#plusbox" x="995.500" y="984.500" stroke="#e0e0e0"/>
<use href="#trash" x="1021" y="985" stroke="#8e8e8e"/>

<!-- watermark -->
<text x="760" y="969" filter="url(#wm)" textLength="260" style="font-family:'Noto Sans CJK SC',sans-serif;font-size:24.500px;fill:#dcdcdc">掘金技术社区 @ 图生生</text>
</svg>
</body></html>
